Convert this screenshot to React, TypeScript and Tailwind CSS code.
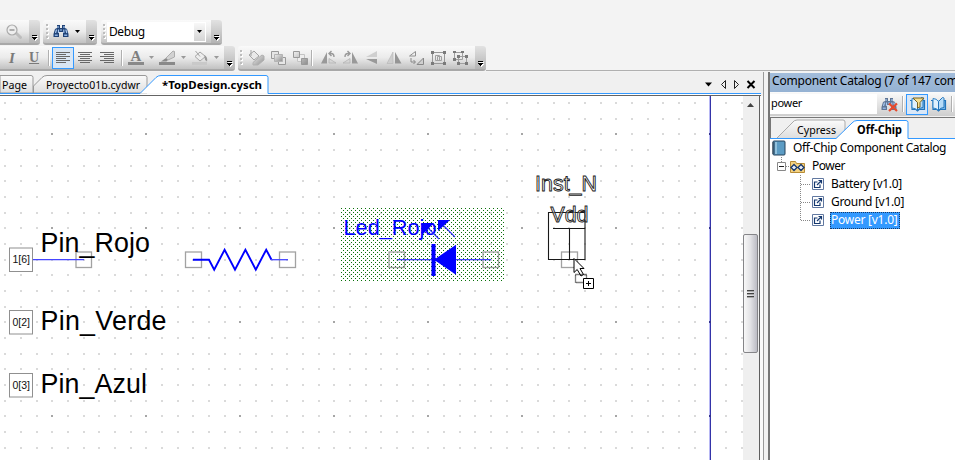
import React from "react";

const ui = "font-['Noto_Sans','Open_Sans',sans-serif]";

function Cap() {
  return (
    <div className="flex h-full w-[11px] shrink-0 items-end justify-center rounded-r-[3px] bg-gradient-to-b from-[#e2e2e2] to-[#b4b4b4] pb-[2px]">
      <svg width="7" height="6" className="ml-[1px]" shapeRendering="crispEdges">
        <path d="M1 1h5v1h-5zM1 3h5v1h-1v1h-1v1h-1v-1h-1v-1h-1z" fill="#fff" />
        <path d="M0 0h5v1h-5zM0 2h5v1h-1v1h-1v1h-1v-1h-1v-1h-1z" fill="#000" />
      </svg>
    </div>
  );
}

function Grip() {
  return (
    <svg width="5" height="16" shapeRendering="crispEdges" className="shrink-0">
      {[0, 4, 8, 12].map((y) => (
        <g key={y}>
          <path d={`M2 ${y + 1}h2v2h-2z`} fill="#fff" />
          <path d={`M1 ${y}h2v2h-2z`} fill="#bdbdbd" />
        </g>
      ))}
    </svg>
  );
}

const bar = "flex h-full shrink-0 items-center bg-gradient-to-b from-[#fafafa] via-[#ebebeb] to-[#c2c2c2] border-b-2 border-[#a8a8a8] rounded-[3px]";

function Arrow({ c = "#000", w = 5 }: { c?: string; w?: number }) {
  return (
    <svg width={w} height="3" viewBox="0 0 6 3" preserveAspectRatio="none" className="shrink-0">
      <path d="M0 0h6l-3 3z" fill={c} />
    </svg>
  );
}

function Binoculars({ gray = false }: { gray?: boolean }) {
  const d = gray ? "#5f7594" : "#1f4276";
  return (
    <svg width="17" height="15" viewBox="0 0 17 15" className="shrink-0">
      <path d="M4 1h3v3h2V1h3v3l2 1 1.500 5v3H10V8H6v5H.500v-3L2 5l2-1z" fill={d} />
      <path d="M5 2v2M11 2v2M3.500 5.500L2.500 9M5.500 5.500V9M10.800 5.500V9M12.800 5.500l1 3.500M7 6h2" stroke="#a9c8f0" strokeWidth="1.200" fill="none" />
      <path d="M1.800 11.300h3M11.200 11.300h3" stroke="#8fb2e2" strokeWidth="1.600" />
      {gray && <path d="M8 6.500l8 7.500M16 6.500L8 14" stroke="#e8492b" strokeWidth="2.200" />}
    </svg>
  );
}

function Lines({ kind }: { kind: number }) {
  const rows = [0, 2, 4, 6, 8, 10];
  return (
    <svg width="14" height="12" shapeRendering="crispEdges">
      {rows.map((y, i) => {
        const w = i % 2 ? 10 : 14;
        const x = kind === 0 ? 0 : kind === 1 ? (14 - w) / 2 : 14 - w;
        return <rect key={y} x={x} y={y} width={w} height="1" fill="#686868" />;
      })}
    </svg>
  );
}

function Slot({ children }: { children: React.ReactNode }) {
  return (
    <div className="flex w-[22px] shrink-0 items-center justify-center">
      <svg width="17" height="16" viewBox="0 0 17 16">
        <defs>
          <linearGradient id="gray" x1="0" y1="0" x2="1" y2="1">
            <stop offset="0" stopColor="#f1f1f1" />
            <stop offset="1" stopColor="#8c8c8c" />
          </linearGradient>
        </defs>
        {children}
      </svg>
    </div>
  );
}

const Sep = () => <div className="h-[16px] w-[2px] shrink-0 border-r border-white bg-[#b0b0b0]" />;

function TopBars() {
  return (
    <div className="h-[72px] shrink-0 bg-[#f3f3f3] pt-[20px]">
      <div className="flex h-[25px]">
        <div className={`${bar} w-[40px] justify-between rounded-l-none`}>
          <svg width="17" height="16" viewBox="0 0 17 16" className="ml-[6px]">
            <path d="M10 9l4.500 4.500" stroke="#bdbdbd" strokeWidth="3" strokeLinecap="round" />
            <circle cx="6" cy="6" r="5" fill="#eee" stroke="#aaa" strokeWidth="1.200" />
            <path d="M3.500 6h5" stroke="#999" strokeWidth="1.500" />
          </svg>
          <Cap />
        </div>
        <div className={`${bar} ml-[3px] w-[54px]`}>
          <div className="ml-[2px]"><Grip /></div>
          <div className="ml-[3px] flex items-center gap-[5px]"><Binoculars /><Arrow /></div>
          <div className="ml-auto h-full"><Cap /></div>
        </div>
        <div className={`${bar} ml-[4px] w-[121px]`}>
          <div className="ml-[1px]"><Grip /></div>
          <div className="flex h-[20px] w-[99px] items-center bg-white pl-[2px]">
            <span className={`${ui} text-[12px] leading-none tracking-[-0.4px]`}>Debug</span>
            <div className="ml-auto mr-px flex h-[18px] w-[11px] items-center justify-center bg-gradient-to-b from-[#f8f8f8] to-[#d4d4d4]"><Arrow /></div>
          </div>
          <div className="ml-auto h-full"><Cap /></div>
        </div>
      </div>
      <div className="mt-px flex h-[25px]">
        <div className={`${bar} w-[235px] rounded-l-none`}>
          <span className="ml-[9px] w-[9px] font-['Liberation_Serif',serif] text-[15px] font-bold italic leading-[18px] text-[#7a7a7a]">I</span>
          <span className="ml-[11px] w-[11px] font-['Liberation_Serif',serif] text-[14px] font-bold leading-[18px] text-[#7a7a7a] underline">U</span>
          <div className="ml-[8px]"><Sep /></div>
          <div className="ml-[2px] flex h-[22px] w-[22px] items-center justify-center border border-[#3399ff] bg-[#d9e6f4]"><Lines kind={0} /></div>
          <div className="ml-[4px]"><Lines kind={1} /></div>
          <div className="ml-[8px]"><Lines kind={2} /></div>
          <div className="ml-[7px]"><Sep /></div>
          <svg width="17" height="16" viewBox="0 0 17 16" className="ml-[5px] shrink-0">
            <text x="8" y="11" textAnchor="middle" fontSize="15" fontWeight="bold" fontFamily="Liberation Serif, serif" fill="#7f7f7f">A</text>
            <path d="M0 12h16v3h-16z" fill="#898989" />
          </svg>
          <div className="ml-[4px]"><Arrow c="#999" /></div>
          <svg width="17" height="16" viewBox="0 0 17 16" className="ml-[5px] shrink-0">
            <path d="M2 11.500L7 8l2 2-1.500 1.500z" fill="#8a8a8a" />
            <path d="M7 8l7-7 1.500.500V7L9 10z" fill="#d2d2d2" stroke="#a0a0a0" strokeWidth=".8" />
            <path d="M0 12h16v3h-16z" fill="#898989" />
          </svg>
          <div className="ml-[5px]"><Arrow c="#999" /></div>
          <svg width="17" height="16" viewBox="0 0 17 16" className="ml-[6px] shrink-0">
            <path d="M0 12h15v3h-15z" fill="#c9c9c9" />
            <path d="M3 6.500l5-4.500 5.500 4.500L8 11zM3.500 1l4.500 5.500" fill="#ededed" stroke="#a6a6a6" />
            <path d="M12.500 5q3.500 2 2.500 6.500q-2.500-1-2.500-4z" fill="#999" />
          </svg>
          <div className="ml-[5px]"><Arrow c="#999" /></div>
          <div className="ml-auto h-full"><Cap /></div>
        </div>
        <div className={`${bar} ml-[3px] w-[248px]`}>
          <div className="ml-[1px] mr-px"><Grip /></div>
          <Slot><path d="M1 5l5-4 5 5-5 4zM3 0v6" fill="#e9e9e9" stroke="#a3a3a3" /><path d="M5 12.500l4-3.500 5-4 2 1v4l-6 5H5z" fill="url(#gray)" stroke="#b0b0b0" /></Slot>
          <Slot><path d="M1.500 1.500h7v7h-7zM8.500 7.500h7v7h-7z" fill="#e6e6e6" stroke="#999" /><path d="M4.500 4.500h8v7h-8z" fill="url(#gray)" stroke="#b3b3b3" /></Slot>
          <Slot><path d="M5.500 4.500h7v7h-7z" fill="#eee" stroke="#c4c4c4" /><path d="M1.500 1.500h6v6h-6zM9.500 8.500h6v6h-6z" fill="url(#gray)" stroke="#999" /></Slot>
          <Sep />
          <div className="w-[4px] shrink-0" />
          <Slot><path d="M1 13.500L7 2v11.500z" fill="#999" /><path d="M9 13V8.500l7 4.500z" fill="#d6d6d6" stroke="#b0b0b0" strokeWidth=".7" /><path d="M9 3.500h2q3 0 3 3.500M11.500 1L9 3.500 11.500 6" fill="none" stroke="#999" strokeWidth="1.400" /></Slot>
          <Slot><path d="M10 2v11.500h6z" fill="#999" /><path d="M8 13V8.500L1 13z" fill="#d6d6d6" stroke="#b0b0b0" strokeWidth=".7" /><path d="M8 3.500H6Q3 3.500 3 7M5.500 1L8 3.500 5.500 6" fill="none" stroke="#999" strokeWidth="1.400" /></Slot>
          <Slot><path d="M13 1v6H2z" fill="#cfcfcf" /><path d="M2 9h11v5z" fill="#999" /></Slot>
          <Slot><path d="M7 2v11.500H1z" fill="#cecece" stroke="#b5b5b5" strokeWidth=".6" /><path d="M9 2v11.500h6.500z" fill="#959595" /></Slot>
          <Slot><path d="M1.500 6l6-4.500V6z" fill="#f1f1f1" stroke="#909090" /><path d="M9 14.500h6.500V8z" fill="#cfcfcf" stroke="#888" /><path d="M3 8v4h4M5.500 10l2 2-2 2" fill="none" stroke="#888" /></Slot>
          <Slot>
            <path d="M2.500 2.500h12v11h-12z" fill="none" stroke="#989898" /><path d="M5.500 5.500h4v5h-4zM7.500 6.500h4v4h-4z" fill="none" stroke="#a0a0a0" />
            <path d="M1 1h3v3h-3zM13 1h3v3h-3zM1 12h3v3h-3zM13 12h3v3h-3z" fill="#7a7a7a" />
          </Slot>
          <Slot>
            <path d="M2.500 2.500h8v7h-8zM6.500 6.500h8v7h-8z" fill="none" stroke="#a0a0a0" />
            <path d="M1 1h3v2h-3zM9 1h3v2h-3zM1 8h3v3h-3zM5 5h3v3h-3zM13 5h3v3h-3zM5 12h3v3h-3zM13 12h3v3h-3z" fill="#7a7a7a" />
          </Slot>
          <div className="ml-auto h-full"><Cap /></div>
        </div>
        <div className="flex-1 border-b border-[#b0b0b0]" />
      </div>
    </div>
  );
}

function DocTabs() {
  return (
    <div className="flex h-[24px] shrink-0 bg-[#f0f0f0]">
      <svg width="763" height="24" className="block">
        <defs><linearGradient id="tab" x2="0" y2="1"><stop stopColor="#fbfbfb" /><stop offset="1" stopColor="#dedede" /></linearGradient></defs>
        <path d="M0 3.500h31q2 0 2 2V21H0z" fill="url(#tab)" stroke="#999" />
        <path d="M33.500 21V14L42 5.500q2-2 5-2h98q2 0 2 2V21z" fill="url(#tab)" stroke="#999" />
        <path d="M140 21.500L156 5.500q2-2 5-2H266q2 0 2 2v16" fill="#fff" />
        <path d="M0 22h761v2H0z" fill="#fff" />
        <path d="M0 21.500H140L156 5.500q2-2 5-2H266q2 0 2 2v16H761" fill="none" stroke="#3399ff" />
        <path d="M0 23.500h761" stroke="#646464" />
        <path d="M705 10.500h7l-3.500 4z" fill="#000" />
        <path d="M725.500 8.500v8l-4-4zM734.500 8.500v8l4-4z" fill="none" stroke="#222" />
        <path d="M747.500 9l7 7M754.500 9l-7 7" stroke="#000" strokeWidth="2" />
        <g fontFamily="Noto Sans, Open Sans, sans-serif" fontSize="11">
          <text x="2" y="17" textLength="25" lengthAdjust="spacingAndGlyphs">Page</text>
          <text x="46" y="17" textLength="94" lengthAdjust="spacingAndGlyphs">Proyecto01b.cydwr</text>
          <text x="162" y="17" textLength="100" lengthAdjust="spacingAndGlyphs" fontWeight="bold">*TopDesign.cysch</text>
        </g>
      </svg>
    </div>
  );
}

const gx = Array.from({ length: 48 }, (_, i) => Math.floor(4.67 + (i * 47) / 3));
const gy = Array.from({ length: 24 }, (_, i) => Math.floor(102.34 + (i * 47) / 3));

function Schematic() {
  return (
    <svg width="743" height="364" viewBox="0 96 743 364" className="block shrink-0 bg-white" fontFamily="Liberation Sans, Arial, sans-serif">
      <defs>
        <pattern id="hatch" width="4" height="4" patternUnits="userSpaceOnUse">
          <path d="M1 0h1v1h-1zM3 2h1v1h-1z" fill="#087008" />
        </pattern>
      </defs>
      <g shapeRendering="crispEdges">
        {gy.map((y, j) => gx.map((x, i) => (
          <rect key={`${i}-${j}`} x={x} y={y} width="2" height="2" fill={i % 6 === 3 && j % 6 === 2 ? "#a6a6a6" : "#dadada"} />
        )))}
        <rect x="709" y="96" width="1" height="364" fill="#b8b8f4" />
        <rect x="710" y="96" width="1" height="364" fill="#3434a8" />
        {[133, 227, 321, 415].map((y) => <rect key={y} x="709" y={y} width="2" height="2" fill="#34348c" />)}
        <rect x="341" y="208" width="163" height="73" fill="url(#hatch)" />
      </g>
      <g fill="#fff" stroke="#909090">
        <rect x="9.500" y="248" width="23" height="23.500" />
        <rect x="9.500" y="310.500" width="23" height="23.500" />
        <rect x="9.500" y="373.500" width="23" height="23.500" />
      </g>
      <g fill="none" stroke="#a2a2a2" strokeWidth="1.300">
        <rect x="76" y="252" width="15.500" height="15.500" />
        <rect x="185.500" y="252" width="16" height="15.500" />
        <rect x="279.500" y="252" width="16" height="15.500" />
        <rect x="389" y="252" width="15.500" height="15.500" />
        <rect x="483" y="252" width="15.500" height="15.500" />
        <rect x="561.500" y="252" width="16" height="15.500" />
      </g>
      <g fontSize="10.500" fill="#111">
        <text x="12.500" y="263" textLength="17.500">1[6]</text>
        <text x="12.500" y="325.500" textLength="17.500">0[2]</text>
        <text x="12.500" y="388.500" textLength="17.500">0[3]</text>
      </g>
      <g fontSize="26.800" fill="#000">
        <text x="40.500" y="252" textLength="109.500">Pin_Rojo</text>
        <text x="40.500" y="330" textLength="126">Pin_Verde</text>
        <text x="40.500" y="393" textLength="106.500">Pin_Azul</text>
      </g>
      <text x="343.500" y="235" fontSize="21.700" fill="#0000ff" textLength="93">Led_Rojo</text>
      <g fill="none" stroke="#0000ff">
        <path d="M33 259.700h51" stroke="#4545ff" strokeWidth="1.300" />
        <path d="M193 259.700h16l5.200 10 10.400-20 10.400 20 10.400-20 10.400 20 10.400-20 5.300 10" strokeWidth="1.900" />
        <path d="M271 259.700h17" stroke="#4545ff" strokeWidth="1.300" />
        <path d="M397 259.700h94" stroke="#4545ff" strokeWidth="1.300" />
        <path d="M428 228l11 11M444 226l11 11" stroke="#3434ff" strokeWidth="1.100" />
      </g>
      <path d="M431.500 244h4v32h-4zM434 259.700l22-15v30zM422 223h12l-12 12zM438 220h12l-12 11z" fill="#0000ff" />
      <path d="M548.500 212.500h36.500v47h-36.500zM553 228.500h32M569.500 228.500v31" fill="none" stroke="#181818" strokeWidth="1.100" />
      <g fill="#fff" fillOpacity=".5" stroke="#222" strokeWidth=".9" fontSize="21.400">
        <text x="535" y="191" textLength="62">Inst_N</text>
        <text x="550.500" y="222" textLength="38">Vdd</text>
      </g>
      <path d="M574 258.500v14l3.200-3 3.800 6.500 2.500-1.500-3.500-6h4z" fill="#fff" stroke="#000" />
      <path d="M575.500 274.500h11v8h-11z" fill="none" stroke="#000" strokeWidth="1.300" strokeDasharray="1 1" />
      <path d="M583.500 278.500h10v10h-10z" fill="#fff" stroke="#000" />
      <path d="M586 283.500h5M588.500 281v5" stroke="#000" />
    </svg>
  );
}

function ScrollBar() {
  return (
    <div className="flex w-[17px] shrink-0 flex-col border-r border-[#5f5f5f] bg-[#efefef] pr-px">
      <div className="flex h-[17px] items-center justify-center"><svg width="7" height="4"><path d="M0 4h7L3.500 0z" fill="#444" /></svg></div>
      <div className="mt-[121px] flex h-[119px] flex-col items-center justify-center gap-px rounded-[2px] border border-[#858588] bg-gradient-to-r from-[#f8f8f8] via-[#e2e2e5] to-[#bcbcc4]">
        {[0, 1, 2].map((i) => <div key={i} className="h-[2px] w-[7px] border-b border-[#aaa] bg-[#444]" />)}
      </div>
    </div>
  );
}

function CatalogBook({ filter = false }: { filter?: boolean }) {
  return (
    <svg width="17" height="17" viewBox="0 0 17 17">
      <path d="M1 4.500h2v9h4l1.500 1.500 1.500-1.500h5.500v-9H14" fill="#7fbdec" stroke="#2274bb" strokeWidth="1.200" />
      <path d="M3 2.500q3.500 0 5.500 3v9q-2-2.500-5.500-2.500z" fill="#dff0fd" stroke="#3285c8" />
      <path d="M8.500 5.500l4-4q1.500 0 1.500 1v9q-3.500 0-5.500 3z" fill="#b5dbf8" stroke="#2274bb" />
      {filter && <path d="M4 2h11l-4 4.500V11l-2.500 1V6.500z" fill="#f7df8f" stroke="#776223" />}
    </svg>
  );
}

function Tree() {
  const items: [string, string][] = [
    ["Battery [v1.0]", "ml-[6px] tracking-[-0.3px]"],
    ["Ground [v1.0]", "ml-[6px] tracking-[-0.3px]"],
    ["Power [v1.0]", "ml-[5px] h-[17px] w-[70px] border border-dotted border-[#193b66] bg-[#3399ff] leading-[14px] tracking-[-0.25px] text-white"],
  ];
  return (
    <div className={`${ui} flex-1 bg-white text-[12px] leading-[18px]`}>
      <div className="flex h-[18px] items-center">
        <svg width="16" height="16" viewBox="0 0 16 16" className="ml-px shrink-0"><rect x="2" y="1" width="12" height="14" rx="1" fill="#5c9cc4" stroke="#26435b" /><path d="M5 2v12" stroke="#c7e7f5" /><path d="M1 3h3M1 5h3M1 7h3M1 9h3M1 11h3M1 13h3" stroke="#345" /></svg>
        <span className="ml-[6px] whitespace-nowrap tracking-[-0.38px]">Off-Chip Component Catalog</span>
      </div>
      <div className="flex h-[18px] items-center">
        <svg width="36" height="18" className="shrink-0">
          <path d="M11.500 0v5M16 9.500h4" stroke="#888" strokeDasharray="1 1" />
          <path d="M7.500 5.500h8v8h-8z" fill="#fff" stroke="#888" /><path d="M9 9.500h5" stroke="#222" />
          <path d="M20.500 4.500h5l1 2h8v9h-14z" fill="#f5d280" stroke="#b78c36" />
          <path d="M21 10.500l3-3 3 3-3 3zM28 10.500l3-3 3 3-3 3z" fill="#e6edf8" stroke="#18386c" strokeWidth="1.300" />
        </svg>
        <span className="ml-[6px] tracking-[-0.5px]">Power</span>
      </div>
      {items.map(([t, cls], i) => (
        <div key={t} className="flex h-[18px] items-center">
          <svg width="55" height="18" className="shrink-0">
            <path d={i === 2 ? "M30.500 0v9.500h10" : "M30.500 0v18M31 9.500h10"} fill="none" stroke="#888" strokeDasharray="1 1" />
            <path d="M42.500 3.500h11v11h-11z" fill="#fff" stroke="#6178a0" />
            <path d="M47.500 7h-3v5.500h5.500V9.500M47 10l4-4M48.500 5.500h3v3" fill="none" stroke="#14386f" strokeWidth="1.200" />
          </svg>
          <span className={`whitespace-nowrap ${cls}`}>{t}</span>
        </div>
      ))}
    </div>
  );
}

function Catalog() {
  return (
    <div className="flex h-full w-[187px] shrink-0 flex-col overflow-hidden border-l-2 border-[#777]">
      <div className={`${ui} mt-px h-[19px] shrink-0 whitespace-nowrap bg-gradient-to-b from-[#a3bddb] to-[#95b2d3] pl-[2px] text-[12px] leading-[16px] tracking-[-0.2px]`}>Component Catalog (7 of 147 com</div>
      <div className="flex h-[24px] shrink-0 items-center bg-gradient-to-b from-[#fbfbfb] to-[#cecece]">
        <div className={`${ui} h-[20px] w-[107px] bg-white pl-[1px] text-[11px] leading-[18px] tracking-[-0.3px]`}>power</div>
        <div className="ml-[4px]"><Binoculars gray /></div>
        <div className="ml-[4px]"><Sep /></div>
        <div className="ml-[2px] flex h-[21px] w-[22px] items-center justify-center border border-[#3399ff] bg-[#d9e7f7]"><CatalogBook filter /></div>
        <div className="ml-[2px]"><CatalogBook /></div>
        <div className="ml-[4px]"><Sep /></div>
      </div>
      <svg width="187" height="23" className="block shrink-0 bg-[#f0f0f0]">
        <path d="M0 1.500h187M.5 1v22" stroke="#777" />
        <path d="M7 22L22 7q2-3 5-3h46q2 0 2 2v16" fill="url(#tab)" stroke="#aaa" />
        <path d="M66 23L82 7q2-3 5-3h49q2 0 2 2v17" fill="#fff" />
        <path d="M0 22.500H66L82 7q2-2.500 5-2.500h49q2 0 2 2v16h49" fill="none" stroke="#3399ff" />
        <g fontFamily="Noto Sans, Open Sans, sans-serif" fontSize="11.500">
          <text x="27" y="18" textLength="39" lengthAdjust="spacingAndGlyphs">Cypress</text>
          <text x="87" y="18" textLength="45" lengthAdjust="spacingAndGlyphs" fontWeight="bold">Off-Chip</text>
        </g>
      </svg>
      <Tree />
    </div>
  );
}

export default function App() {
  return (
    <div className="flex h-[460px] w-[955px] flex-col overflow-hidden bg-[#f3f3f3] text-black">
      <TopBars />
      <div className="flex min-h-0 flex-1">
        <div className="flex w-[764px] shrink-0 flex-col border-r border-[#999] bg-[#fafafa]">
          <DocTabs />
          <div className="flex flex-1"><Schematic /><ScrollBar /></div>
        </div>
        <div className="w-[4px] shrink-0 bg-[#f2f2f2]" />
        <Catalog />
      </div>
    </div>
  );
}
